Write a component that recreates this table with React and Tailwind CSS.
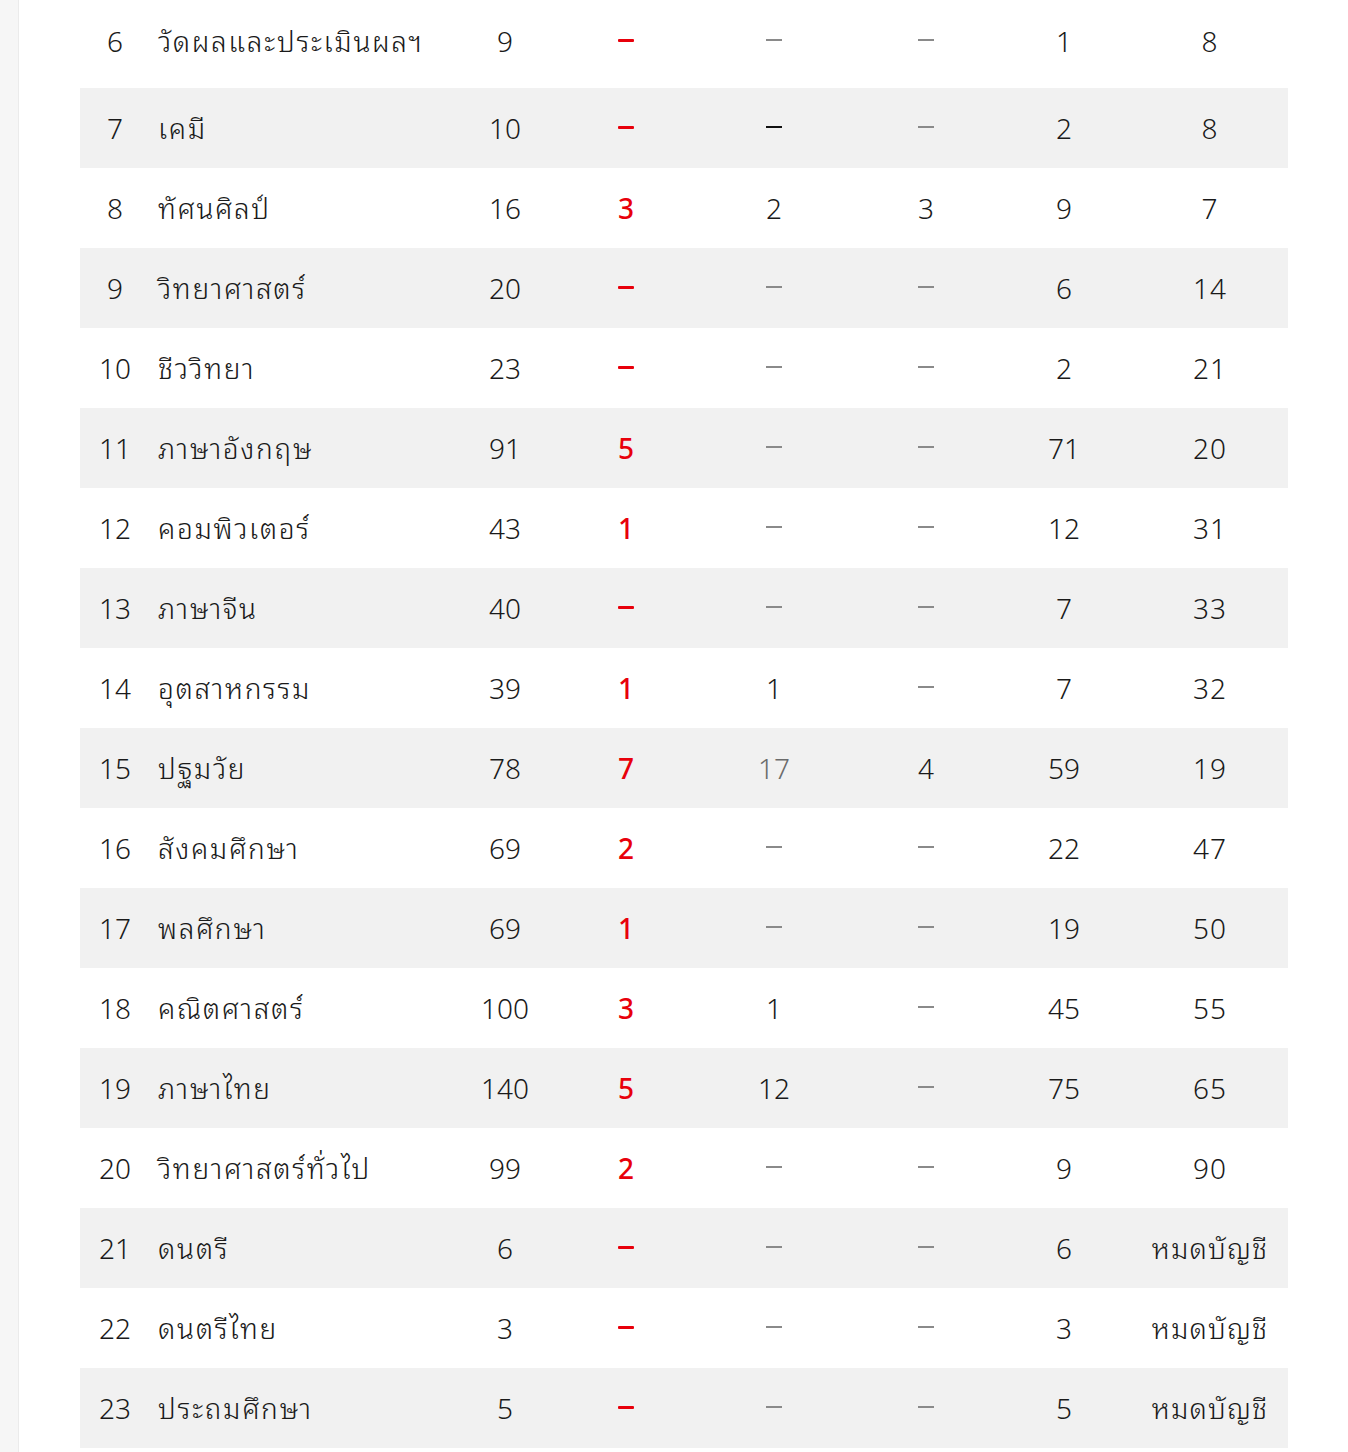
import React from "react";

const rows = [
  [6, "วัดผลและประเมินผลฯ", "9", "-", "g", "g", "1", "8"],
  [7, "เคมี", "10", "-", "d", "g", "2", "8"],
  [8, "ทัศนศิลป์", "16", "3", "2", "3", "9", "7"],
  [9, "วิทยาศาสตร์", "20", "-", "g", "g", "6", "14"],
  [10, "ชีววิทยา", "23", "-", "g", "g", "2", "21"],
  [11, "ภาษาอังกฤษ", "91", "5", "g", "g", "71", "20"],
  [12, "คอมพิวเตอร์", "43", "1", "g", "g", "12", "31"],
  [13, "ภาษาจีน", "40", "-", "g", "g", "7", "33"],
  [14, "อุตสาหกรรม", "39", "1", "1", "g", "7", "32"],
  [15, "ปฐมวัย", "78", "7", "17g", "4", "59", "19"],
  [16, "สังคมศึกษา", "69", "2", "g", "g", "22", "47"],
  [17, "พลศึกษา", "69", "1", "g", "g", "19", "50"],
  [18, "คณิตศาสตร์", "100", "3", "1", "g", "45", "55"],
  [19, "ภาษาไทย", "140", "5", "12", "g", "75", "65"],
  [20, "วิทยาศาสตร์ทั่วไป", "99", "2", "g", "g", "9", "90"],
  [21, "ดนตรี", "6", "-", "g", "g", "6", "หมดบัญชี"],
  [22, "ดนตรีไทย", "3", "-", "g", "g", "3", "หมดบัญชี"],
  [23, "ประถมศึกษา", "5", "-", "g", "g", "5", "หมดบัญชี"],
];

function Red({ v }) {
  if (v === "-") {
    return <span className="inline-block w-[16px] h-[3px] bg-[#e8000b] rounded-[1px]" />;
  }
  return <span className="text-[#e8000b] font-medium">{v}</span>;
}

function Cell({ v }) {
  if (v === "g") return <span className="inline-block w-[16px] h-[1.5px] bg-[#8a8a8a]" />;
  if (v === "d") return <span className="inline-block w-[16px] h-[2px] bg-[#111]" />;
  if (v === "17g") return <span className="text-[#6b6b6b]">17</span>;
  return <span>{v}</span>;
}

export default function App() {
  return (
    <div
      className="flex min-h-[1452px] bg-white text-[#1a1a1a] font-light"
      style={{ fontFamily: '"Noto Sans Thai Looped", "Noto Sans Thai", "Noto Sans", sans-serif' }}
    >
      <div className="w-[19px] shrink-0 bg-[#f6f6f6] border-r border-[#ebebeb]" />
      <div className="flex-1 pl-[61px] pr-[60px]">
        <div className="w-[1208px]">
          {rows.map((r, i) => (
            <div
              key={r[0]}
              className={`grid grid-cols-[68px_302px_110px_132px_164px_140px_136px_156px] items-center text-[28px] leading-none ${
                i === 0 ? "h-[88px] pb-2" : "h-[80px] pb-[2px]"
              } ${i % 2 === 1 ? "bg-[#f1f1f1]" : "bg-white"}`}
            >
              <div className="text-center pl-[2px]">{r[0]}</div>
              <div className="pl-[10px] whitespace-nowrap tracking-[0.06em]">{r[1]}</div>
              <div className="text-center flex justify-center">{r[2]}</div>
              <div className="flex justify-center">
                <Red v={r[3]} />
              </div>
              <div className="flex justify-center">
                <Cell v={r[4]} />
              </div>
              <div className="flex justify-center">
                <Cell v={r[5]} />
              </div>
              <div className="flex justify-center">{r[6]}</div>
              <div className="flex justify-center whitespace-nowrap tracking-[0.04em]">{r[7]}</div>
            </div>
          ))}
        </div>
      </div>
    </div>
  );
}
